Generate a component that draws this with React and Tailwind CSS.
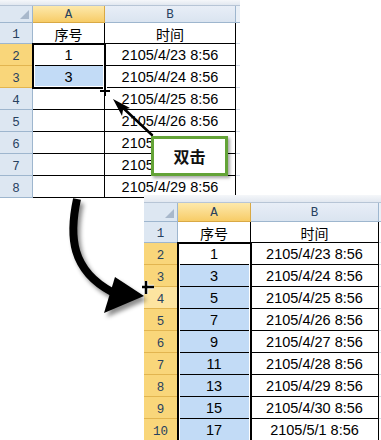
const HEAD_FONT = "font-['Liberation_Mono',monospace] text-[12.5px] text-[#27415f] leading-none"
const CELL_FONT = "font-['Liberation_Sans',Arial,sans-serif] text-[14.5px] text-black leading-none"
const CJK_FONT = "font-['Noto_Sans_CJK_SC',sans-serif] text-[14px] text-black leading-none"

const TOP_ROWS = [
  { n: 1, a: '序号', b: '时间' },
  { n: 2, a: '1', b: '2105/4/23 8:56', sel: true },
  { n: 3, a: '3', b: '2105/4/24 8:56', sel: true, blue: true },
  { n: 4, a: '', b: '2105/4/25 8:56' },
  { n: 5, a: '', b: '2105/4/26 8:56' },
  { n: 6, a: '', b: '2105/4/27 8:56' },
  { n: 7, a: '', b: '2105/4/28 8:56' },
  { n: 8, a: '', b: '2105/4/29 8:56' },
]

const FILLED_ROWS = [
  { n: 1, a: '序号', b: '时间' },
  { n: 2, a: '1', b: '2105/4/23 8:56', sel: true },
  { n: 3, a: '3', b: '2105/4/24 8:56', sel: true, blue: true },
  { n: 4, a: '5', b: '2105/4/25 8:56', sel: true, blue: true, hover: true },
  { n: 5, a: '7', b: '2105/4/26 8:56', sel: true, blue: true },
  { n: 6, a: '9', b: '2105/4/27 8:56', sel: true, blue: true },
  { n: 7, a: '11', b: '2105/4/28 8:56', sel: true, blue: true },
  { n: 8, a: '13', b: '2105/4/29 8:56', sel: true, blue: true },
  { n: 9, a: '15', b: '2105/4/30 8:56', sel: true, blue: true },
  { n: 10, a: '17', b: '2105/5/1 8:56', sel: true, blue: true },
]

function rowHeadCls(r) {
  if (r.hover) return 'bg-[#fde4a0] border-[#e2b550]'
  if (r.sel) return 'bg-[#f9d67a] border-[#e2b550]'
  return 'bg-[#dde7f2] border-[#9eb6ce]'
}

function Sheet({ box, strip, head, r1, rh, w, rows, selBox }) {
  return (
    <div className={`relative bg-white overflow-hidden ${box}`}>
      <div className={`${strip} bg-gradient-to-b from-[#f5f7fa] to-[#e2e8f0] border-b border-[#b7c5d6]`} />
      <div className={`flex ${head}`}>
        <div className={`${w[0]} shrink-0 relative bg-[#dde7f2] border-r border-b border-[#9eb6ce]`}>
          <svg className="absolute right-[3px] bottom-[3px]" width="9" height="9">
            <path d="M9 0V9H0Z" fill="#a8b8cb" />
          </svg>
        </div>
        <div className={`${w[1]} shrink-0 flex items-center justify-center pt-[2px] bg-gradient-to-b from-[#fde9ab] to-[#f7cc66] border-r border-b border-[#d9a945] ${HEAD_FONT}`}>A</div>
        <div className={`${w[2]} shrink-0 flex items-center justify-center pt-[2px] bg-gradient-to-b from-[#e8eef7] to-[#dae4f0] border-r border-b border-[#9eb6ce] ${HEAD_FONT}`}>B</div>
        <div className="flex-1 bg-[#eaf0f7] border-b border-[#9eb6ce]" />
      </div>
      {rows.map((r) => (
        <div key={r.n} className={`flex ${r.n === 1 ? r1 : rh}`}>
          <div className={`${w[0]} shrink-0 flex items-end justify-center pb-[2px] border-r border-b ${rowHeadCls(r)} ${HEAD_FONT}`}>{r.n}</div>
          <div className={`${w[1]} shrink-0 flex items-center justify-center pt-[1px] border-r border-b border-black ${r.blue ? 'bg-[#c2dbf6]' : 'bg-white'} ${r.n === 1 ? CJK_FONT : CELL_FONT}`}>{r.a}</div>
          <div className={`${w[2]} shrink-0 flex items-center justify-center pt-[1px] border-r border-b border-black ${r.n === 1 ? CJK_FONT : CELL_FONT}`}>{r.b}</div>
          <div className="flex-1 border-b border-[#d4dbe6]" />
        </div>
      ))}
      <div className={`absolute border-2 border-black shadow-[inset_0_0_0_1px_#fff] ${selBox}`} />
    </div>
  )
}

export default function App() {
  return (
    <div className="relative w-[381px] h-[440px] overflow-hidden bg-white">
      {/* before: two values typed in column A */}
      <Sheet
        box="w-[240px] h-[198px]"
        strip="h-[6px]"
        head="h-[17px]"
        r1="h-[21px]"
        rh="h-[22px]"
        w={['w-[33px]', 'w-[72px]', 'w-[131px]']}
        rows={TOP_ROWS}
        selBox="left-[32px] top-[43px] w-[74px] h-[46px]"
      />

      {/* after: the series filled down */}
      <div className="relative -mt-[3px] ml-[144px]">
        <Sheet
          box="w-[237px] h-[245px]"
          strip="h-[8px]"
          head="h-[19px]"
          r1="h-[21px]"
          rh="h-[22px]"
          w={['w-[34px]', 'w-[73px]', 'w-[128px]']}
          rows={FILLED_ROWS}
          selBox="left-[33px] top-[47px] w-[75px] h-[210px]"
        />
      </div>

      <svg className="absolute left-0 top-0 pointer-events-none" width="381" height="440">
        <defs>
          <filter id="drop" x="-30%" y="-30%" width="160%" height="160%">
            <feDropShadow dx="3" dy="4" stdDeviation="2.2" floodColor="#000" floodOpacity="0.45" />
          </filter>
        </defs>

        {/* fill handle cursor, top sheet */}
        <path d="M100 91H110M105 86V96" stroke="#fff" strokeWidth="4" />
        <path d="M100 91H110M105 86V96" stroke="#000" strokeWidth="2" />

        {/* pointer to the fill handle */}
        <path d="M152 135L121 106" stroke="#000" strokeWidth="2.5" strokeLinecap="round" />
        <path d="M113 99L130 108L123 110L122 116Z" fill="#000" />

        {/* big curved arrow */}
        <g filter="url(#drop)">
          <path d="M77 199C69 236 71 270 112 292" stroke="#000" strokeWidth="8" fill="none" />
          <path d="M115 277L144 296L104 313Z" fill="#000" />
        </g>

        {/* fill handle cursor, bottom sheet */}
        <path d="M142 287H154M146 281V294" stroke="#fff" strokeWidth="4.5" />
        <path d="M142 287H154M146 281V294" stroke="#000" strokeWidth="2.5" />
      </svg>

      <div className="absolute left-[151px] top-[136px] w-[77px] h-[40px] flex items-center justify-center bg-white border-[3px] border-[#63a337] shadow-[2px_2px_3px_rgba(0,0,0,0.35)] font-['Noto_Sans_CJK_SC',sans-serif] text-[16px] font-bold text-[#111] leading-none">
        双击
      </div>
    </div>
  )
}
